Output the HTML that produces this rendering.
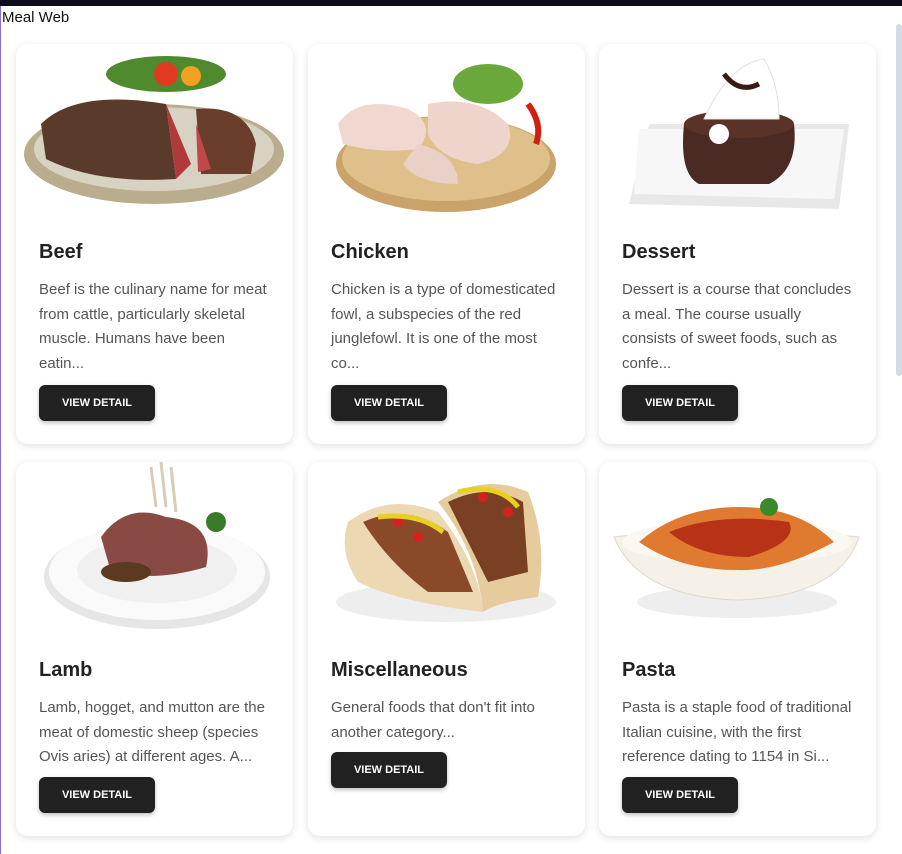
<!DOCTYPE html>
<html><head><meta charset="utf-8"><style>
*{margin:0;padding:0;box-sizing:border-box}
body{width:902px;height:854px;overflow:hidden;background:#fff;font-family:"Liberation Sans",Arial,sans-serif;position:relative}
.top{position:absolute;left:0;top:0;width:902px;height:6px;background:#0e0a1e}
.lline{position:absolute;left:0;top:6px;width:1px;height:848px;background:#8a6fd0}
.brand{position:absolute;left:2px;top:9px;font-size:15px;color:#111}
.sb{position:absolute;left:896px;top:24px;width:6px;height:352px;background:#d3dbe3;border-radius:3px}
.card{position:absolute;width:277px;background:#fff;border-radius:12px;box-shadow:0 2px 8px rgba(0,0,0,.12)}
.card svg{position:absolute;left:0;top:0}
.card h2{position:absolute;left:23px;top:197px;font-size:20px;font-weight:bold;color:#222}
.card p{position:absolute;left:23px;top:234px;width:235px;font-size:15px;line-height:24.5px;color:#555}
.btn{position:absolute;left:23px;width:116px;height:36px;background:#212121;border-radius:6px;color:#fff;font-size:11px;font-weight:bold;text-align:center;line-height:36px;box-shadow:0 2px 4px rgba(0,0,0,.25)}
</style></head><body>
<div class="top"></div><div class="lline"></div>
<div class="brand">Meal Web</div>
<div class="sb"></div>

<div class="card" style="left:16px;top:44px;height:400px">
<svg width="277" height="175"><ellipse cx="138" cy="110" rx="130" ry="50" fill="#b9ad8e"/><ellipse cx="138" cy="105" rx="120" ry="42" fill="#d8d2c2"/><ellipse cx="150" cy="30" rx="60" ry="18" fill="#4f8a2e"/><circle cx="150" cy="30" r="12" fill="#e03a20"/><circle cx="175" cy="32" r="10" fill="#f4a020"/><path d="M25 80 Q60 45 150 60 L160 135 Q80 140 30 115Z" fill="#5a3a2a"/><path d="M150 60 L175 120 L160 135Z" fill="#b03a3a"/><path d="M180 65 Q230 60 240 100 L235 130 L185 130Z" fill="#6b3e2c"/><path d="M180 80 L195 125 L182 128Z" fill="#c04848"/></svg>
<h2>Beef</h2><p>Beef is the culinary name for meat from cattle, particularly skeletal muscle. Humans have been eatin...</p><div class="btn" style="top:341px">VIEW DETAIL</div></div>

<div class="card" style="left:308px;top:44px;height:400px">
<svg width="277" height="175"><ellipse cx="138" cy="120" rx="110" ry="48" fill="#c9a36a"/><ellipse cx="138" cy="115" rx="104" ry="42" fill="#e0c08a"/><ellipse cx="180" cy="40" rx="35" ry="20" fill="#6aa83c"/><path d="M30 80 Q50 50 100 65 Q130 80 110 105 Q70 110 35 100Z" fill="#f0d8d0"/><path d="M120 60 Q170 50 200 80 Q210 110 170 120 Q130 115 120 90Z" fill="#efd4cc"/><path d="M110 100 Q150 110 150 140 Q110 140 95 120Z" fill="#ead0c6"/><path d="M220 60 Q235 80 228 100" stroke="#d02010" stroke-width="6" fill="none"/></svg>
<h2>Chicken</h2><p>Chicken is a type of domesticated fowl, a subspecies of the red junglefowl. It is one of the most co...</p><div class="btn" style="top:341px">VIEW DETAIL</div></div>

<div class="card" style="left:599px;top:44px;height:400px">
<svg width="277" height="175"><path d="M50 80 L250 80 L240 165 L30 160Z" fill="#e8e8e8"/><path d="M40 85 L245 85 L235 155 L35 150Z" fill="#f7f7f7"/><path d="M85 80 Q80 130 100 140 L170 140 Q200 125 195 80Z" fill="#4a2a22"/><ellipse cx="140" cy="80" rx="55" ry="14" fill="#5a3328"/><path d="M105 75 Q130 20 165 15 Q180 40 180 75Z" fill="#fff" stroke="#e0e0e0"/><path d="M125 30 Q140 50 160 40" stroke="#3a1a14" stroke-width="5" fill="none"/><circle cx="120" cy="90" r="10" fill="#fff"/></svg>
<h2>Dessert</h2><p>Dessert is a course that concludes a meal. The course usually consists of sweet foods, such as confe...</p><div class="btn" style="top:341px">VIEW DETAIL</div></div>

<div class="card" style="left:16px;top:462px;height:374px">
<svg width="277" height="175"><ellipse cx="141" cy="115" rx="113" ry="52" fill="#e6e6e6"/><ellipse cx="141" cy="110" rx="108" ry="48" fill="#fafafa"/><ellipse cx="141" cy="108" rx="80" ry="33" fill="#f0f0f0"/><path d="M85 75 Q110 40 150 55 Q200 60 190 105 Q140 120 95 110Z" fill="#8a4a44"/><ellipse cx="110" cy="110" rx="25" ry="10" fill="#5a3a20"/><path d="M135 5 L140 45 M145 0 L150 45 M155 5 L160 50" stroke="#d8ccb8" stroke-width="3"/><circle cx="200" cy="60" r="10" fill="#3a7a2a"/></svg>
<h2>Lamb</h2><p>Lamb, hogget, and mutton are the meat of domestic sheep (species Ovis aries) at different ages. A...</p><div class="btn" style="top:315px">VIEW DETAIL</div></div>

<div class="card" style="left:308px;top:462px;height:374px">
<svg width="277" height="175"><ellipse cx="138" cy="140" rx="110" ry="20" fill="#eee"/><path d="M40 60 Q80 30 130 50 Q170 100 175 150 Q90 140 50 120 Q30 90 40 60Z" fill="#ecd8b2"/><path d="M130 40 Q175 10 220 30 Q240 80 230 135 Q190 140 175 150 Q170 90 130 40Z" fill="#e6cc9c"/><path d="M55 60 Q100 40 140 70 L165 130 L120 130 Q80 100 55 60Z" fill="#8a4a2a"/><path d="M140 40 Q180 20 215 40 L220 110 L180 120Z" fill="#7a4024"/><circle cx="90" cy="60" r="5" fill="#d82020"/><circle cx="110" cy="75" r="5" fill="#d82020"/><circle cx="175" cy="35" r="5" fill="#d82020"/><circle cx="200" cy="50" r="5" fill="#d82020"/><path d="M70 55 Q110 50 135 70 M150 30 Q190 20 210 45" stroke="#e8d020" stroke-width="5" fill="none"/></svg>
<h2>Miscellaneous</h2><p>General foods that don't fit into another category...</p><div class="btn" style="top:290px">VIEW DETAIL</div></div>

<div class="card" style="left:599px;top:462px;height:374px">
<svg width="277" height="175"><ellipse cx="138" cy="140" rx="100" ry="16" fill="#eee"/><path d="M15 75 Q138 60 260 75 Q240 135 138 138 Q40 135 15 75Z" fill="#f5f0e8" stroke="#e0d8cc"/><ellipse cx="138" cy="80" rx="115" ry="22" fill="#fbf8f2"/><path d="M40 80 Q80 45 140 45 Q200 45 235 80 Q180 110 138 108 Q80 108 40 80Z" fill="#e07a30"/><path d="M70 70 Q120 50 190 60 Q200 80 150 95 Q100 95 70 70Z" fill="#b83218"/><circle cx="170" cy="45" r="9" fill="#3a8a2a"/></svg>
<h2>Pasta</h2><p>Pasta is a staple food of traditional Italian cuisine, with the first reference dating to 1154 in Si...</p><div class="btn" style="top:315px">VIEW DETAIL</div></div>
</body></html>
